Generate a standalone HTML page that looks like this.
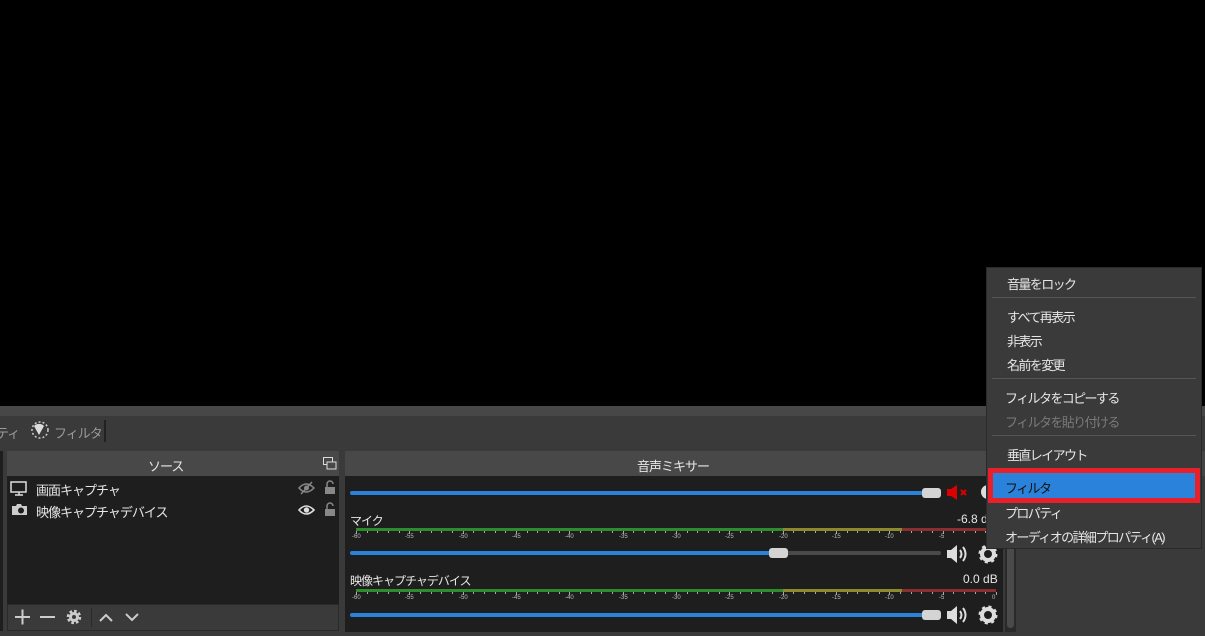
<!DOCTYPE html>
<html><head><meta charset="utf-8"><style>
*{margin:0;padding:0;box-sizing:border-box}
body{width:1205px;height:636px;background:#3a3a3a;position:relative;overflow:hidden;font-family:"Liberation Sans","Noto Sans CJK JP",sans-serif;color:#e6e6e6;font-size:13px}
.a{position:absolute}
.t{white-space:nowrap}
.m{letter-spacing:-1.6px}
.s{letter-spacing:-1px}
.slider{position:absolute;height:4px;border-radius:2px;background:#2a82da}
.knob{position:absolute;width:19px;height:10px;border-radius:3px;background:#d4d4d4}
.lbl{position:absolute;font-size:6px;color:#bbb}
</style></head><body>
<div class="a" style="left:0;top:0;width:1205px;height:406px;background:#000"></div>
<div class="a" style="left:0;top:406px;width:1205px;height:10px;background:#474747"></div>
<div class="a" style="left:0;top:416px;width:1205px;height:32px;background:#3a3a3a"></div>
<div class="a t s" style="left:-4px;top:423px;color:#999;font-size:13px">ティ</div>
<svg class="a" style="left:31px;top:421px" width="20" height="20"><circle cx="9" cy="9" r="8" fill="none" stroke="#ccc" stroke-width="1.5" stroke-dasharray="2 2"/><path d="M3 5a7 7 0 0 1 10 0L8 14z" fill="#ddd"/></svg>
<div class="a t s" style="left:54px;top:423px;color:#999">フィルタ</div>
<div class="a" style="left:104px;top:420px;width:2px;height:22px;background:#222"></div>
<div class="a" style="left:0;top:451px;width:3px;height:180px;background:#1e1e1e"></div>
<div class="a" style="left:7px;top:451px;width:332px;height:25px;background:#484848"></div>
<div class="a t s" style="left:148px;top:456px">ソース</div>
<svg class="a" style="left:323px;top:457px" width="14" height="13"><rect x="0.5" y="0.5" width="9" height="7" fill="none" stroke="#ddd"/><rect x="4" y="5" width="9" height="7" fill="#484848" stroke="#ddd"/></svg>
<div class="a" style="left:7px;top:476px;width:332px;height:128px;background:#1e1e1e"></div>
<svg class="a" style="left:10px;top:481px" width="18" height="16"><rect x="1" y="1" width="15" height="10" fill="none" stroke="#ddd" stroke-width="1.5"/><path d="M5 14h8M9 11v3" stroke="#ddd" stroke-width="1.5"/></svg>
<div class="a t s" style="left:36px;top:480px">画面キャプチャ</div>
<svg class="a" style="left:11px;top:503px" width="17" height="13"><path d="M1 3h4l1-2h4l1 2h5v9H1z" fill="#ccc"/><circle cx="10" cy="7.5" r="3" fill="#1e1e1e"/></svg>
<div class="a t s" style="left:36px;top:502px">映像キャプチャデバイス</div>
<svg class="a" style="left:298px;top:481px" width="17" height="14"><path d="M1 7q7-8 15 0q-8 8-15 0z" fill="none" stroke="#888" stroke-width="1.5"/><circle cx="8.5" cy="7" r="2.5" fill="#888"/><path d="M3 13L14 1" stroke="#888" stroke-width="1.5"/></svg>
<svg class="a" style="left:324px;top:480px" width="12" height="15"><path d="M3 7V4a3 3 0 0 1 6 0" fill="none" stroke="#888" stroke-width="1.5"/><rect x="1" y="7" width="10" height="7" fill="#888"/></svg>
<svg class="a" style="left:298px;top:503px" width="17" height="14"><path d="M1 7q7-8 15 0q-8 8-15 0z" fill="none" stroke="#ddd" stroke-width="1.6"/><circle cx="8.5" cy="7" r="2.7" fill="#ddd"/></svg>
<svg class="a" style="left:324px;top:502px" width="12" height="15"><path d="M3 7V4a3 3 0 0 1 6 0" fill="none" stroke="#888" stroke-width="1.5"/><rect x="1" y="7" width="10" height="7" fill="#888"/></svg>
<div class="a" style="left:7px;top:604px;width:332px;height:27px;background:#3a3a3a;border:1px solid #2a2a2a"></div>
<svg class="a" style="left:12px;top:607px" width="135" height="20" stroke="#ccc" stroke-width="2" fill="none">
<path d="M3 10h15M10.5 2.5v15"/><path d="M28 10h15"/>
<circle cx="62" cy="10" r="5.5" stroke-width="3.5" stroke-dasharray="2.5 1.8"/><circle cx="62" cy="10" r="3.5" stroke-width="3"/>
<path d="M88 14l6-6 6 6M114 7l6 6 6-6"/></svg>
<div class="a" style="left:91px;top:608px;width:1px;height:19px;background:#2a2a2a"></div>
<div class="a" style="left:345px;top:451px;width:658px;height:25px;background:#484848"></div>
<div class="a t s" style="left:637px;top:456px">音声ミキサー</div>
<div class="a" style="left:345px;top:476px;width:658px;height:156px;background:#1e1e1e"></div>
<div class="a" style="left:1005px;top:476px;width:11px;height:156px;background:#2a2a2a"></div>
<div class="a" style="left:1007px;top:478px;width:7px;height:150px;border-radius:4px;background:#4a4a4a"></div>
<div class="slider" style="left:350px;top:491px;width:578px"></div>
<div class="knob" style="left:922px;top:488px"></div>
<svg class="a" style="left:946px;top:484px" width="28" height="17"><path d="M1 5h4l6-4v15l-6-4H1z" fill="#d00"/><path d="M15 6l5 5M20 6l-5 5" stroke="#d00" stroke-width="2"/></svg>
<svg class="a" style="left:978px;top:483px" width="10" height="18"><circle cx="10" cy="9" r="7" fill="#ddd"/></svg>
<div class="a t s" style="left:350px;top:512px;font-size:12px">マイク</div>
<div class="a t" style="left:957px;top:512px;font-size:12px">-6.8 d</div>
<div class="a" style="left:356px;top:528px;width:427px;height:3px;background:#2e8b2e"></div>
<div class="a" style="left:783px;top:528px;width:119px;height:3px;background:#8b8b2e"></div>
<div class="a" style="left:902px;top:528px;width:94px;height:3px;background:#8b2e2e"></div>
<div class="a" style="left:350px;top:551px;width:425px;height:4px;border-radius:2px;background:#2a82da"></div>
<div class="a" style="left:775px;top:551px;width:166px;height:4px;border-radius:2px;background:#4a4a4a"></div>
<div class="knob" style="left:769px;top:548px"></div>
<div class="a t s" style="left:350px;top:572px;font-size:12px">映像キャプチャデバイス</div>
<div class="a t" style="left:963px;top:572px;font-size:12px">0.0 dB</div>
<div class="a" style="left:356px;top:589px;width:427px;height:3px;background:#2e8b2e"></div>
<div class="a" style="left:783px;top:589px;width:119px;height:3px;background:#8b8b2e"></div>
<div class="a" style="left:902px;top:589px;width:94px;height:3px;background:#8b2e2e"></div>
<div class="slider" style="left:350px;top:613px;width:578px"></div>
<div class="knob" style="left:922px;top:610px"></div>
<svg class="a" style="left:946px;top:544px" width="24" height="20"><path d="M1 6h4l6-5v18l-6-5H1z" fill="#ddd"/><path d="M14 6q3 4 0 8M17 3q5 7 0 14" stroke="#ddd" stroke-width="2" fill="none"/></svg>
<svg class="a" style="left:946px;top:605px" width="24" height="20"><path d="M1 6h4l6-5v18l-6-5H1z" fill="#ddd"/><path d="M14 6q3 4 0 8M17 3q5 7 0 14" stroke="#ddd" stroke-width="2" fill="none"/></svg>
<svg class="a" style="left:978px;top:544px" width="20" height="20"><circle cx="10" cy="10" r="6" fill="none" stroke="#ddd" stroke-width="4"/><circle cx="10" cy="10" r="8" fill="none" stroke="#ddd" stroke-width="3" stroke-dasharray="3 3.3"/></svg>
<svg class="a" style="left:978px;top:605px" width="20" height="20"><circle cx="10" cy="10" r="6" fill="none" stroke="#ddd" stroke-width="4"/><circle cx="10" cy="10" r="8" fill="none" stroke="#ddd" stroke-width="3" stroke-dasharray="3 3.3"/></svg>
<div id="lb"></div>
<script>
var h='';var labs=[-60,-55,-50,-45,-40,-35,-30,-25,-20,-15,-10,-5,0];
[531,592].forEach(function(y){
for(var d=-60;d<=0;d++){var x=356+(d+60)*640/60;
h+='<div class="a" style="left:'+Math.round(x)+'px;top:'+y+'px;width:1px;height:'+(d%5==0?3:2)+'px;background:#aaa"></div>';}
labs.forEach(function(d){var x=356+(d+60)*640/60;h+='<div class="lbl" style="left:'+(Math.round(x)-4)+'px;top:'+(y+3)+'px">'+d+'</div>';});
});
document.getElementById('lb').innerHTML=h;
</script>
<div class="a" style="left:1018px;top:451px;width:187px;height:25px;background:#444"></div>
<div class="a" style="left:986px;top:267px;width:216px;height:282px;background:#3a3a3a;border:1px solid #2a2a2a"></div>
<div class="a t m" style="left:1007px;top:274px">音量をロック</div>
<div class="a" style="left:992px;top:297px;width:204px;height:1px;background:#555"></div>
<div class="a t m" style="left:1007px;top:307px">すべて再表示</div>
<div class="a t m" style="left:1007px;top:331px">非表示</div>
<div class="a t m" style="left:1007px;top:355px">名前を変更</div>
<div class="a" style="left:992px;top:378px;width:204px;height:1px;background:#555"></div>
<div class="a t m" style="left:1005px;top:388px">フィルタをコピーする</div>
<div class="a t m" style="left:1005px;top:412px;color:#7a7a7a">フィルタを貼り付ける</div>
<div class="a" style="left:992px;top:435px;width:204px;height:1px;background:#555"></div>
<div class="a t m" style="left:1007px;top:445px">垂直レイアウト</div>
<div class="a" style="left:988px;top:468px;width:212px;height:35px;background:#e8202a"></div>
<div class="a" style="left:993px;top:473px;width:202px;height:25px;background:#2a82da"></div>
<div class="a t m" style="left:1005px;top:478px;color:#111">フィルタ</div>
<div class="a t m" style="left:1005px;top:503px">プロパティ</div>
<div class="a t m" style="left:1005px;top:527px">オーディオの詳細プロパティ(A)</div>
</body></html>
